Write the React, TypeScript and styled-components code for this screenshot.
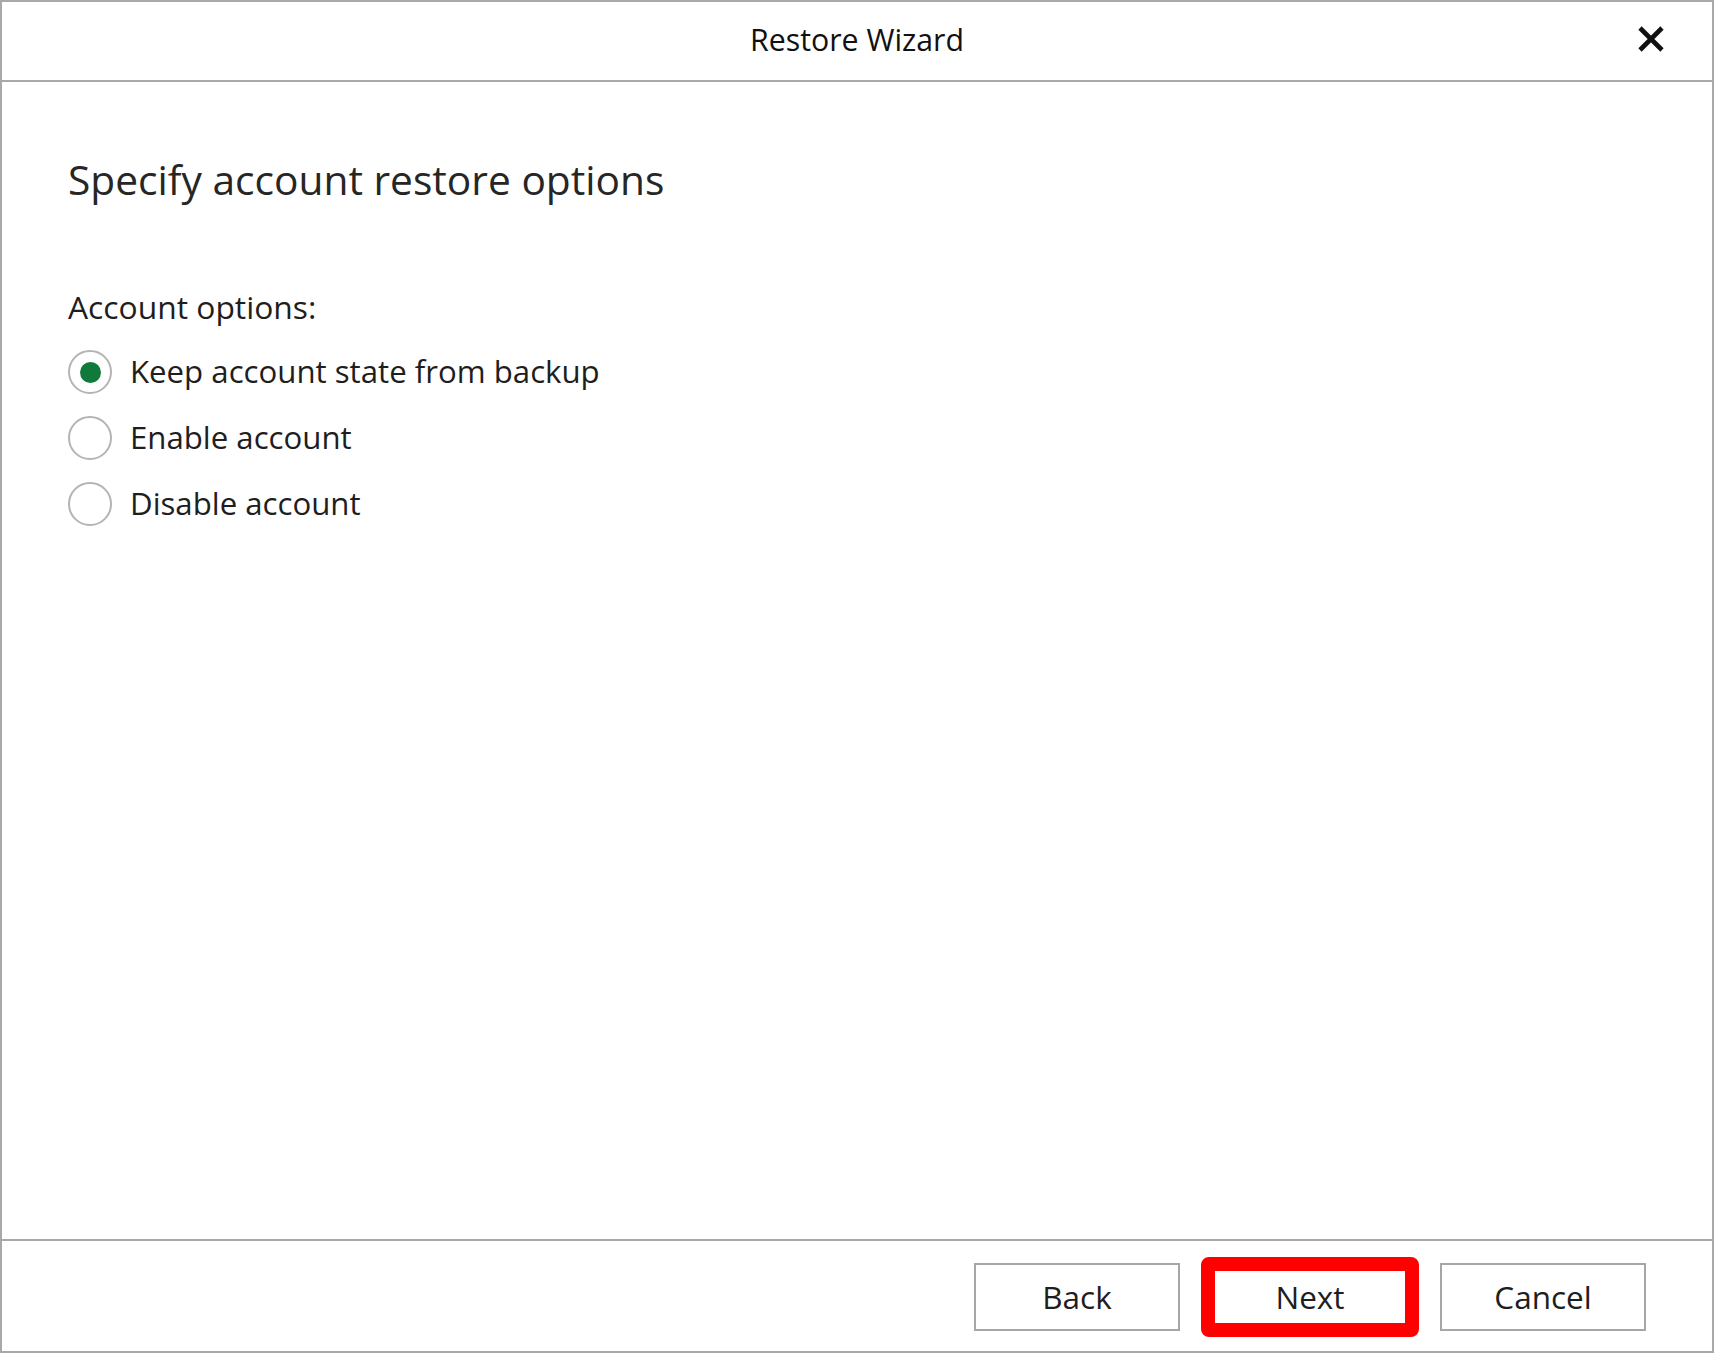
import React, { useState } from 'react';
import styled, { createGlobalStyle } from 'styled-components';

const GlobalStyle = createGlobalStyle`
  html, body {
    margin: 0;
    padding: 0;
    background: #ffffff;
  }
  body {
    font-family: 'Open Sans', 'Noto Sans', 'Liberation Sans', sans-serif;
    color: #1e1e1e;
  }
  * {
    box-sizing: border-box;
  }
`;

const Dialog = styled.div`
  width: 1714px;
  height: 1353px;
  border: 2px solid #a9a9a9;
  background: #ffffff;
  display: flex;
  flex-direction: column;
`;

const Header = styled.div`
  height: 80px;
  flex-shrink: 0;
  border-bottom: 2px solid #a9a9a9;
  display: grid;
  grid-template-columns: 1fr auto 1fr;
  align-items: center;
`;

const Title = styled.div`
  grid-column: 2;
  font-size: 30.3px;
  line-height: 1.2;
  color: #111111;
  margin-top: -2px;
`;

const CloseButton = styled.button`
  grid-column: 3;
  justify-self: end;
  margin-right: 48px;
  margin-top: -4px;
  width: 26px;
  height: 26px;
  padding: 0;
  border: none;
  background: transparent;
  cursor: pointer;
  display: flex;
`;

const Body = styled.div`
  flex: 1;
  padding: 73px 0 0 66px;
  display: flex;
  flex-direction: column;
`;

const Heading = styled.h1`
  margin: 0;
  font-size: 40.7px;
  font-weight: 400;
  line-height: 1.2;
  color: #262626;
`;

const GroupLabel = styled.div`
  margin-top: 84px;
  font-size: 31.8px;
  line-height: 1.2;
  color: #1e1e1e;
`;

const OptionList = styled.div`
  margin-top: 13px;
  display: flex;
  flex-direction: column;
`;

const OptionRow = styled.label`
  height: 66px;
  display: flex;
  align-items: center;
  gap: 18px;
  font-size: 31.2px;
  line-height: 1.2;
  color: #1e1e1e;
  cursor: pointer;
`;

const RadioCircle = styled.span<{ $checked: boolean }>`
  width: 44px;
  height: 44px;
  border-radius: 50%;
  border: 2px solid #b4b4b4;
  display: flex;
  align-items: center;
  justify-content: center;
  flex-shrink: 0;

  &::after {
    content: '';
    width: 21px;
    height: 21px;
    border-radius: 50%;
    background: #0f7a3c;
    display: ${(p) => (p.$checked ? 'block' : 'none')};
  }
`;

const Footer = styled.div`
  height: 112px;
  flex-shrink: 0;
  border-top: 2px solid #a9a9a9;
  padding: 22px 66px 0 0;
  display: flex;
  justify-content: flex-end;
  align-items: flex-start;
  gap: 27px;
`;

const ButtonWrap = styled.div`
  position: relative;
`;

const WizardButton = styled.button`
  width: 206px;
  height: 68px;
  border: 2px solid #a6a6a6;
  background: #ffffff;
  font-family: 'Open Sans', 'Noto Sans', 'Liberation Sans', sans-serif;
  font-size: 31.5px;
  line-height: 1.2;
  color: #1e1e1e;
  padding: 0;
  cursor: pointer;
`;

const Highlight = styled.div`
  position: absolute;
  inset: -6px;
  border: 14px solid #ff0000;
  border-radius: 8px;
  pointer-events: none;
`;

const options = [
  { id: 'keep', label: 'Keep account state from backup' },
  { id: 'enable', label: 'Enable account' },
  { id: 'disable', label: 'Disable account' },
];

export default function App() {
  const [selected, setSelected] = useState('keep');

  return (
    <>
      <GlobalStyle />
      <Dialog>
        <Header>
          <Title>Restore Wizard</Title>
          <CloseButton aria-label="Close">
            <svg width="26" height="26" viewBox="0 0 26 26">
              <path d="M2 2 L24 24 M24 2 L2 24" stroke="#111" strokeWidth="4.6" fill="none" />
            </svg>
          </CloseButton>
        </Header>
        <Body>
          <Heading>Specify account restore options</Heading>
          <GroupLabel>Account options:</GroupLabel>
          <OptionList>
            {options.map((o) => (
              <OptionRow key={o.id} onClick={() => setSelected(o.id)}>
                <RadioCircle $checked={selected === o.id} />
                {o.label}
              </OptionRow>
            ))}
          </OptionList>
        </Body>
        <Footer>
          <WizardButton>Back</WizardButton>
          <ButtonWrap>
            <WizardButton>Next</WizardButton>
            <Highlight />
          </ButtonWrap>
          <WizardButton>Cancel</WizardButton>
        </Footer>
      </Dialog>
    </>
  );
}
